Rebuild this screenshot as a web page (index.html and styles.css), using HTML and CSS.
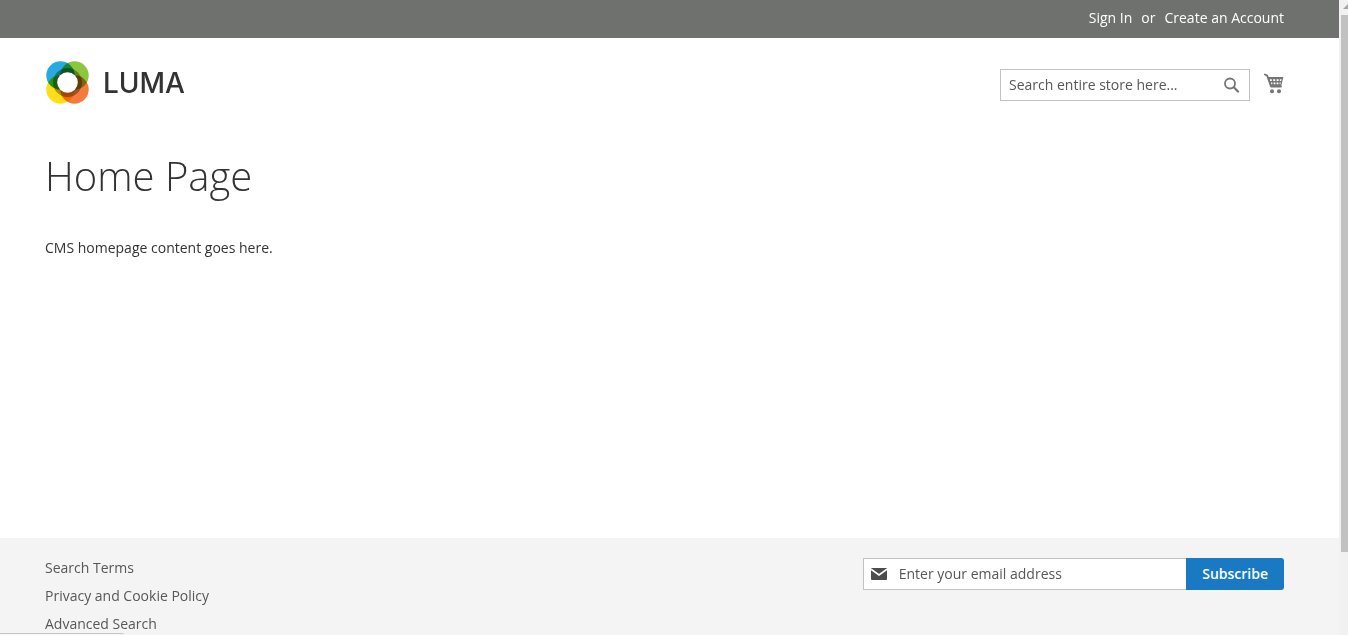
FILE: index.html
```html
<!DOCTYPE html>
<html lang="en">
<head>
    <meta charset="UTF-8">
    <meta name="viewport" content="width=device-width, initial-scale=1.0">
    <title>Home Page</title>
    <link rel="stylesheet" href="styles.css">
</head>
<body>
    <div class="page-wrapper">
        <!-- Top panel and header -->
        <header>
            <div class="panel">
                <a href="#">Sign In</a>
                <span>or</span>
                <a href="#">Create an Account</a>
            </div>
            <div class="header-content">
                <a class="logo" href="#">
                    <svg width="44" height="44" viewBox="0 0 44 44" aria-hidden="true">
                        <g class="logo-rings">
                            <circle cx="15.5" cy="14.5" r="14.2" fill="#27a9e1"/>
                            <circle cx="29.5" cy="14.5" r="14.2" fill="#8cc63f"/>
                            <circle cx="15.5" cy="28.5" r="14.2" fill="#ffde17"/>
                            <circle cx="29.5" cy="28.5" r="14.2" fill="#f47b3e"/>
                            <circle cx="22.5" cy="21.5" r="14.5" fill="#aba68c"/>
                        </g>
                        <circle cx="22.5" cy="21.5" r="10.3" fill="#fff"/>
                    </svg>
                    <span>LUMA</span>
                </a>
                <div class="header-tools">
                    <form class="search">
                        <input type="text" aria-label="Search" placeholder="Search entire store here...">
                        <button type="button" aria-label="Search">
                            <svg width="16" height="16" viewBox="0 0 16 16">
                                <circle cx="6" cy="6.5" r="5" fill="none" stroke="#757575" stroke-width="1.8"/>
                                <path d="M9.8 10.3L14 14.5" stroke="#757575" stroke-width="2.2" stroke-linecap="round"/>
                            </svg>
                        </button>
                    </form>
                    <a class="cart" href="#" aria-label="My Cart">
                        <svg width="20" height="22" viewBox="0 0 20 22">
                            <path d="M.9 1.5L3.2 2.6L7 13.5H17" fill="none" stroke="#757575" stroke-width="1.8" stroke-linecap="round" stroke-linejoin="round"/>
                            <path d="M3.4 4H19.4L17.2 13H6.4Z" fill="#757575"/>
                            <path d="M5.8 6.2h2v1.8h-1.6zM9.2 6.2h2v1.8h-2zM12.6 6.2h2v1.8h-2zM15.8 6.2h1.8l-.4 1.8h-1.4zM6.9 9.5h1.4v1.8h-1zM9.6 9.5h1.8v1.8h-1.8zM12.6 9.5h1.8v1.8h-1.8zM15.6 9.5h1.2l-.4 1.8h-.8z" fill="#fff"/>
                            <circle cx="8" cy="18.3" r="2" fill="#757575"/>
                            <circle cx="15" cy="18.3" r="2" fill="#757575"/>
                        </svg>
                    </a>
                </div>
            </div>
        </header>

        <!-- Content -->
        <main>
            <h1>Home Page</h1>
            <p>CMS homepage content goes here.</p>
        </main>

        <!-- Footer -->
        <footer>
            <ul class="links">
                <li><a href="#">Search Terms</a></li>
                <li><a href="#">Privacy and Cookie Policy</a></li>
                <li><a href="#">Advanced Search</a></li>
            </ul>
            <form class="newsletter">
                <div class="field">
                    <svg width="16" height="12" viewBox="0 0 16 12" aria-hidden="true">
                        <rect width="16" height="12" rx="1" fill="#4d4d4d"/>
                        <path d="M0 1.2L8 7L16 1.2" fill="none" stroke="#fff" stroke-width="1.7"/>
                    </svg>
                    <input type="email" aria-label="Email address" placeholder="Enter your email address">
                </div>
                <button type="button">Subscribe</button>
            </form>
        </footer>
    </div>

    <div class="scrollbar" aria-hidden="true">
        <svg width="7" height="15" viewBox="0 0 7 15"><path d="M2 9L7 4V9Z" fill="#a3a3a3"/></svg>
        <div class="thumb"></div>
    </div>
    <div class="status" aria-hidden="true"></div>
</body>
</html>
```

FILE: styles.css
```css
* {
    box-sizing: border-box;
}

body {
    margin: 0;
    height: 100vh;
    display: flex;
    overflow: hidden;
    background-color: #fff;
    color: #333;
    font-family: 'Open Sans', 'Noto Sans', sans-serif;
    font-size: 14px;
    line-height: 20px;
}

a {
    color: inherit;
    text-decoration: none;
}

input, button {
    font: inherit;
    border: none;
    margin: 0;
    padding: 0;
}

svg {
    display: block;
}

.page-wrapper {
    flex: 1;
    display: flex;
    flex-direction: column;
}

/* Top panel */
.panel {
    display: flex;
    justify-content: flex-end;
    gap: 9px;
    padding: 8px 55px 10px;
    background-color: #6e716e;
    color: #fff;
}

/* Header */
.header-content {
    display: flex;
    justify-content: space-between;
    padding: 23px 55px 0 45px;
}

.logo {
    display: flex;
    align-items: center;
    gap: 14px;
    color: #333;
    font-family: 'Inter', sans-serif;
    font-size: 28px;
    font-weight: 500;
}

.logo-rings {
    isolation: isolate;
}

.logo-rings circle {
    mix-blend-mode: multiply;
}

.header-tools {
    display: flex;
    align-items: flex-start;
    gap: 14px;
    padding-top: 8px;
}

.search {
    display: flex;
    align-items: center;
    width: 250px;
    height: 32px;
    padding: 0 9px 0 8px;
    border: 1px solid #c2c2c2;
    background-color: #fff;
}

input {
    flex: 1;
    min-width: 0;
    outline: none;
    background: none;
}

input::placeholder {
    color: #575757;
    opacity: 1;
}

.search button {
    background: none;
    cursor: pointer;
}

.cart {
    padding-top: 4px;
}

/* Content */
main {
    flex: 1;
    padding: 49px 55px 0 45px;
}

h1 {
    margin: 0 0 40px;
    font-size: 40px;
    font-weight: 300;
    line-height: 44px;
}

p {
    margin: 0;
}

/* Footer */
footer {
    display: flex;
    justify-content: space-between;
    padding: 20px 55px 1px 45px;
    background-color: #f4f4f4;
}

.links {
    display: flex;
    flex-direction: column;
    gap: 8px;
    margin: 0;
    padding: 0;
    list-style: none;
    color: #575757;
}

.newsletter {
    display: flex;
    width: 34%;
    height: 32px;
}

.field {
    flex: 1;
    display: flex;
    align-items: center;
    gap: 12px;
    padding-left: 7px;
    border: 1px solid #c2c2c2;
    border-right: none;
    background-color: #fff;
}

.newsletter button {
    padding: 0 16px;
    border-radius: 0 3px 3px 0;
    background-color: #1979c3;
    color: #fff;
    font-weight: 600;
    cursor: pointer;
}

/* Scrollbar and status strip */
.scrollbar {
    display: flex;
    flex-direction: column;
    width: 9px;
    padding: 0 0 83px 2px;
    background-color: #f1f1f1;
}

.thumb {
    flex: 1;
    background-color: #c1c1c1;
}

.status {
    position: fixed;
    left: 0;
    bottom: 0;
    width: 124px;
    height: 2px;
    border-top: 1px solid #c8c8c8;
    border-top-right-radius: 2px;
    background-color: #f4f4f4;
}
```
